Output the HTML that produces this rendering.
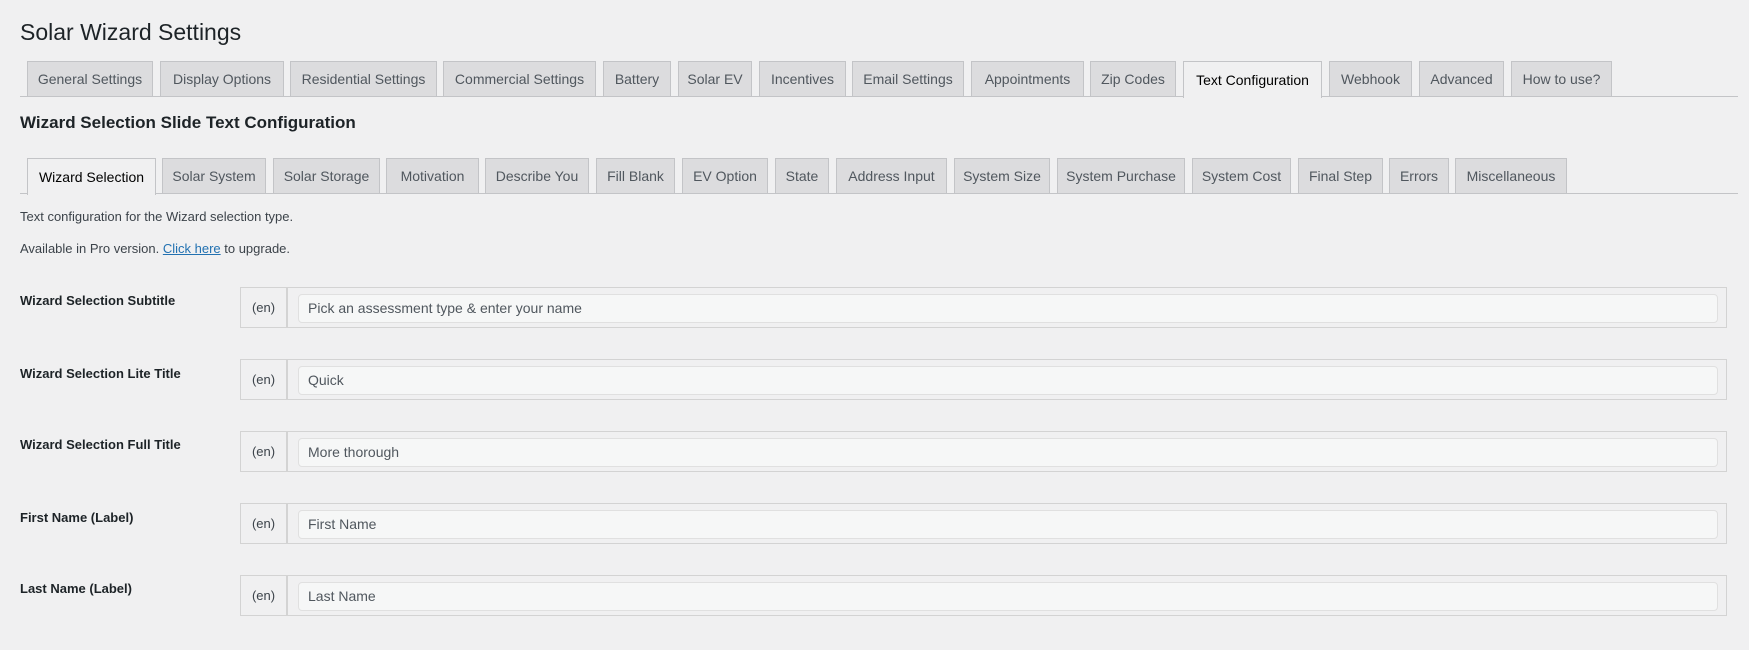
<!DOCTYPE html>
<html><head><meta charset="utf-8"><style>
body{margin:0;background:#f0f0f1;font-family:"Liberation Sans",sans-serif;color:#1d2327;width:1749px;height:650px;overflow:hidden;position:relative}
.a{position:absolute}
h1{position:absolute;left:20px;top:19px;margin:0;font-size:23px;font-weight:400;color:#1d2327}
.tab{position:absolute;height:35px;background:#dcdcde;border:1px solid #c3c4c7;border-bottom:none;box-sizing:border-box;font-size:14px;color:#50575e;font-weight:400;display:flex;align-items:center;justify-content:center;white-space:nowrap}
.tab.on{background:#f0f0f1;color:#000;height:37px}
.line{position:absolute;left:20px;width:1718px;height:1px;background:#c3c4c7}
h2{position:absolute;left:20px;top:113px;margin:0;font-size:17px;font-weight:600;color:#1d2327}
.p{position:absolute;left:20px;font-size:13px;color:#3c434a}
.p a{color:#2271b1;text-decoration:underline}
.lbl{position:absolute;left:20px;font-size:13px;font-weight:700;color:#1d2327}
.box{position:absolute;left:240px;width:1487px;height:41px;border:1px solid #d3d3d3;box-sizing:border-box;background:#f0f0f1}
.en{position:absolute;left:0;top:0;width:45px;height:39px;border-right:2px solid #d3d3d3;font-size:13px;color:#3c434a;display:flex;align-items:center;justify-content:center}
.in{position:absolute;left:57px;top:6px;width:1420px;height:29px;border:1px solid #e0e0e0;border-radius:4px;background:#f6f7f7;box-sizing:border-box;font-size:14px;color:#50575e;padding-left:9px;line-height:27px}
</style></head><body>
<h1>Solar Wizard Settings</h1>
<div class="tab" style="left:27px;top:61px;width:126px">General Settings</div>
<div class="tab" style="left:160px;top:61px;width:124px">Display Options</div>
<div class="tab" style="left:290px;top:61px;width:147px">Residential Settings</div>
<div class="tab" style="left:443px;top:61px;width:153px">Commercial Settings</div>
<div class="tab" style="left:603px;top:61px;width:68px">Battery</div>
<div class="tab" style="left:678px;top:61px;width:74px">Solar EV</div>
<div class="tab" style="left:759px;top:61px;width:87px">Incentives</div>
<div class="tab" style="left:852px;top:61px;width:112px">Email Settings</div>
<div class="tab" style="left:971px;top:61px;width:113px">Appointments</div>
<div class="tab" style="left:1090px;top:61px;width:86px">Zip Codes</div>
<div class="tab on" style="left:1183px;top:61px;width:139px">Text Configuration</div>
<div class="tab" style="left:1329px;top:61px;width:83px">Webhook</div>
<div class="tab" style="left:1419px;top:61px;width:85px">Advanced</div>
<div class="tab" style="left:1511px;top:61px;width:101px">How to use?</div>
<div class="line" style="top:96px"></div>
<div class="a" style="left:1184px;top:96px;width:137px;height:1px;background:#f0f0f1"></div>
<h2>Wizard Selection Slide Text Configuration</h2>
<div class="tab on" style="left:27px;top:158px;width:129px">Wizard Selection</div>
<div class="tab" style="left:162px;top:158px;width:104px">Solar System</div>
<div class="tab" style="left:273px;top:158px;width:107px">Solar Storage</div>
<div class="tab" style="left:386px;top:158px;width:93px">Motivation</div>
<div class="tab" style="left:485px;top:158px;width:104px">Describe You</div>
<div class="tab" style="left:596px;top:158px;width:79px">Fill Blank</div>
<div class="tab" style="left:682px;top:158px;width:86px">EV Option</div>
<div class="tab" style="left:775px;top:158px;width:54px">State</div>
<div class="tab" style="left:836px;top:158px;width:111px">Address Input</div>
<div class="tab" style="left:954px;top:158px;width:96px">System Size</div>
<div class="tab" style="left:1057px;top:158px;width:128px">System Purchase</div>
<div class="tab" style="left:1192px;top:158px;width:99px">System Cost</div>
<div class="tab" style="left:1298px;top:158px;width:85px">Final Step</div>
<div class="tab" style="left:1389px;top:158px;width:60px">Errors</div>
<div class="tab" style="left:1455px;top:158px;width:112px">Miscellaneous</div>
<div class="line" style="top:193px"></div>
<div class="a" style="left:28px;top:193px;width:127px;height:1px;background:#f0f0f1"></div>
<div class="p" style="top:209px">Text configuration for the Wizard selection type.</div>
<div class="p" style="top:241px">Available in Pro version. <a>Click here</a> to upgrade.</div>

<div class="lbl" style="top:293px">Wizard Selection Subtitle</div>
<div class="box" style="top:287px"><div class="en">(en)</div><div class="in">Pick an assessment type &amp; enter your name</div></div>
<div class="lbl" style="top:366px">Wizard Selection Lite Title</div>
<div class="box" style="top:359px"><div class="en">(en)</div><div class="in">Quick</div></div>
<div class="lbl" style="top:437px">Wizard Selection Full Title</div>
<div class="box" style="top:431px"><div class="en">(en)</div><div class="in">More thorough</div></div>
<div class="lbl" style="top:510px">First Name (Label)</div>
<div class="box" style="top:503px"><div class="en">(en)</div><div class="in">First Name</div></div>
<div class="lbl" style="top:581px">Last Name (Label)</div>
<div class="box" style="top:575px"><div class="en">(en)</div><div class="in">Last Name</div></div>
</body></html>
